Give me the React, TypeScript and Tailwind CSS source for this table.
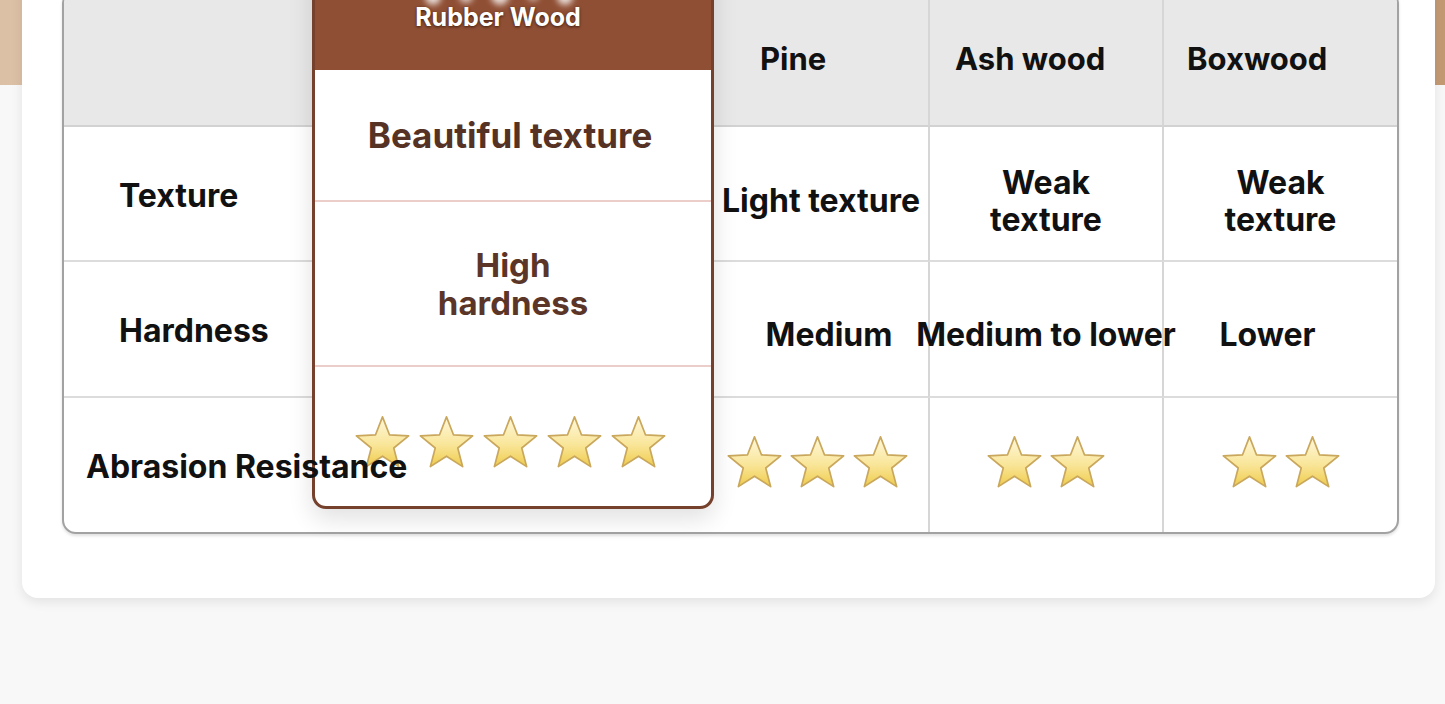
import React, { useId } from "react";

const Star: React.FC = () => {
  const id = useId();
  return (
    <svg width="57" height="54" viewBox="0 0 60 57" className="shrink-0">
      <defs>
        <linearGradient id={id} x1="0" y1="0" x2="0" y2="1">
          <stop offset="0%" stopColor="#fff8dc" />
          <stop offset="55%" stopColor="#f9e69a" />
          <stop offset="100%" stopColor="#efcb4c" />
        </linearGradient>
      </defs>
      <polygon
        points="30,2 37.35,20.89 57.58,22.04 41.89,34.86 47.05,54.46 30,43.5 12.95,54.46 18.11,34.86 2.42,22.04 22.65,20.89"
        fill={`url(#${id})`}
        stroke="#c9a75c"
        strokeWidth="1.8"
        strokeLinejoin="round"
      />
    </svg>
  );
};

const Stars: React.FC<{ count: number; gap?: string }> = ({ count, gap = "gap-[6px]" }) => (
  <div className={`flex items-center ${gap}`}>
    {Array.from({ length: count }).map((_, i) => (
      <Star key={i} />
    ))}
  </div>
);

export default function App() {
  const cell = "flex items-center border-b-2 border-[#dcdcdc] bg-white";
  const head = "flex items-center border-b-2 border-[#d2d2d2] bg-[#e8e8e8]";

  return (
    <div className="h-[704px] w-[1445px] overflow-hidden bg-[#f8f8f8] font-['Inter',sans-serif] text-[#111]">
      {/* tan banner peeking out behind the card */}
      <div className="h-[85px] bg-gradient-to-r from-[#dcc0a5] via-[#ead5c0] to-[#c49a73]" />

      {/* white card */}
      <div className="relative mx-[22px] -mt-[115px] h-[628px] w-[1413px] rounded-[16px] bg-white pl-[40px] pr-[36px] pt-[20px] shadow-[0_4px_12px_rgba(0,0,0,0.09)]">
        <div className="grid grid-cols-[248px_402px_214px_234px_1fr] grid-rows-[135px_135px_136px_134px] rounded-[14px] border-2 border-[#a2a2a2] bg-white shadow-[0_2px_3px_rgba(0,0,0,0.12)]">
          {/* Rubber wood highlight column */}
          <div className="relative z-10 col-start-2 row-span-4 row-start-1 -mt-[32px] mb-[23px] flex flex-col overflow-hidden rounded-b-[14px] border-[3px] border-[#76412c] bg-white shadow-[0_10px_24px_rgba(0,0,0,0.12)]">
            <div className="relative flex h-[107px] shrink-0 flex-col items-center justify-end bg-[#8f4f34] pb-[40px] pr-[30px]">
              {/* product photo fragments at the top */}
              <div className="absolute left-[110px] top-[22px] flex gap-[18px] blur-[3px]">
                <span className="h-[20px] w-[16px] rounded-full bg-white/80" />
                <span className="h-[18px] w-[14px] rounded-full bg-white/70" />
                <span className="h-[20px] w-[18px] rounded-full bg-white/80" />
                <span className="h-[16px] w-[12px] rounded-full bg-white/60" />
                <span className="h-[20px] w-[16px] rounded-full bg-white/80" />
              </div>
              <span className="relative text-[25px] font-bold leading-[26px] text-white [text-shadow:0_1px_3px_rgba(40,15,5,0.8)]">
                Rubber Wood
              </span>
            </div>
            <div className="flex h-[132px] shrink-0 items-center justify-center border-b-2 border-[#ebcdca] pr-[6px] text-[35px] font-bold text-[#553224]">
              Beautiful texture
            </div>
            <div className="flex h-[165px] shrink-0 items-center justify-center border-b-2 border-[#ebcdca] text-center text-[33px] font-bold leading-[38px] text-[#5b3628]">
              High
              <br />
              hardness
            </div>
            <div className="flex flex-1 items-center justify-center pr-[6px] pt-[10px]">
              <Stars count={5} gap="gap-[7px]" />
            </div>
          </div>

          {/* header row */}
          <div className={`${head} rounded-tl-[12px]`} />
          <div className={`${head} pl-[46px] pt-[2px] text-[31px] font-bold`}>Pine</div>
          <div className={`${head} border-l-2 border-l-[#d6d6d6] pl-[25px] pt-[2px] text-[31px] font-bold`}>Ash wood</div>
          <div className={`${head} rounded-tr-[12px] border-l-2 border-l-[#d6d6d6] pl-[23px] pt-[2px] text-[31px] font-bold`}>Boxwood</div>

          {/* texture row */}
          <div className={`${cell} pl-[55px] pt-[4px] text-[32px] font-bold`}>Texture</div>
          <div className={`${cell} justify-center whitespace-nowrap pt-[14px] text-[32px] font-bold`}>Light texture</div>
          <div className={`${cell} justify-center border-l-2 border-l-[#d6d6d6] pt-[14px] text-center text-[32px] font-bold leading-[37px]`}>
            Weak
            <br />
            texture
          </div>
          <div className={`${cell} justify-center border-l-2 border-l-[#d6d6d6] pt-[14px] text-center text-[32px] font-bold leading-[37px]`}>
            Weak
            <br />
            texture
          </div>

          {/* hardness row */}
          <div className={`${cell} pl-[55px] pt-[4px] text-[32px] font-bold`}>Hardness</div>
          <div className={`${cell} justify-center whitespace-nowrap pl-[16px] pt-[12px] text-[32px] font-bold`}>Medium</div>
          <div className={`${cell} relative z-20 justify-center whitespace-nowrap border-l-2 border-l-[#d6d6d6] pt-[12px] text-[32px] font-bold`}>
            Medium to lower
          </div>
          <div className={`${cell} justify-center border-l-2 border-l-[#d6d6d6] pr-[26px] pt-[12px] text-[32px] font-bold`}>Lower</div>

          {/* abrasion row */}
          <div className="relative z-20 flex items-center whitespace-nowrap rounded-bl-[12px] pl-[22px] pt-[4px] text-[32px] font-bold">
            Abrasion Resistance
          </div>
          <div className="flex items-center justify-center pb-[6px] pr-[8px]">
            <Stars count={3} />
          </div>
          <div className="flex items-center justify-center border-l-2 border-[#d6d6d6] pb-[6px]">
            <Stars count={2} />
          </div>
          <div className="flex items-center justify-center rounded-br-[12px] border-l-2 border-[#d6d6d6] pb-[6px]">
            <Stars count={2} />
          </div>
        </div>
      </div>
    </div>
  );
}
